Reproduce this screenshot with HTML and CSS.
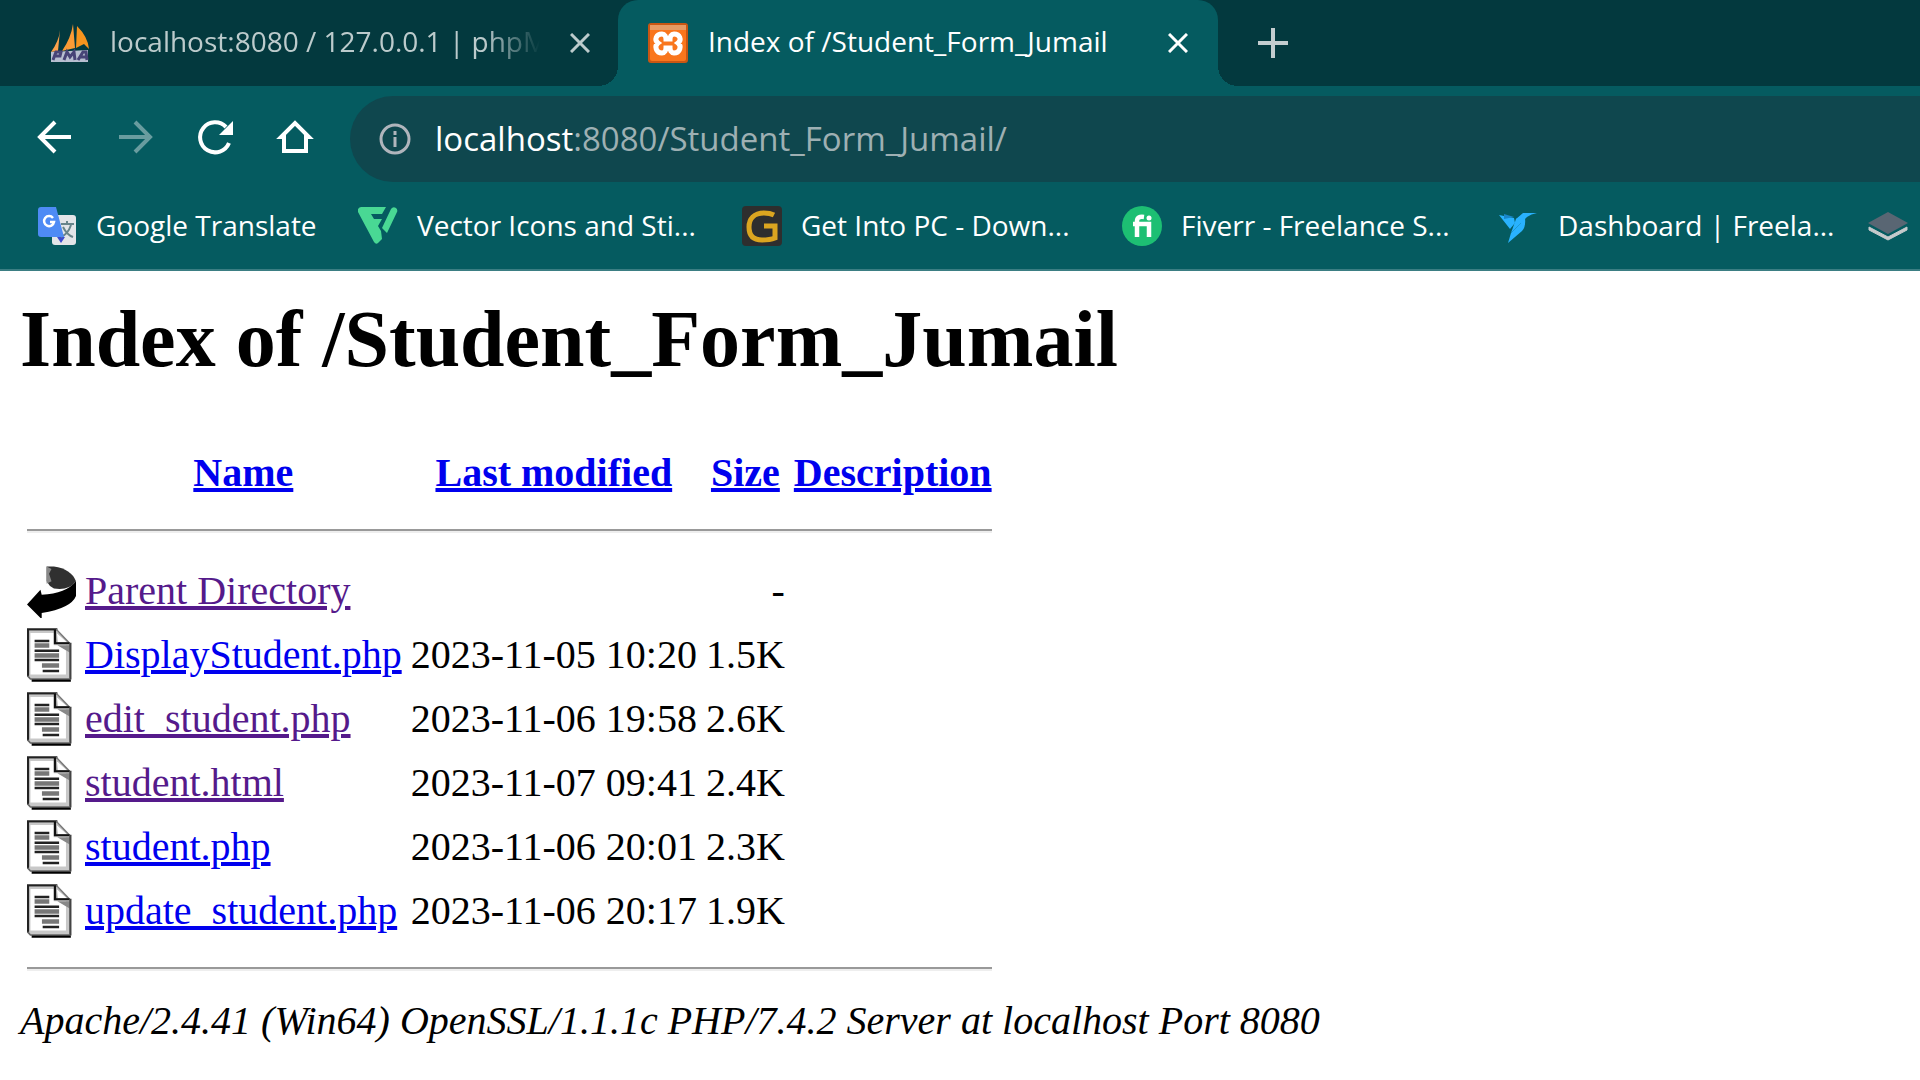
FILE: index.html
```html
<!DOCTYPE html>
<html lang="en">
<head>
<meta charset="utf-8">
<title>Index of /Student_Form_Jumail</title>
<link rel="stylesheet" href="styles.css">
</head>
<body>
<svg class="defs" width="0" height="0" aria-hidden="true">
  <symbol id="file" viewBox="0.6 0 20 22">
    <path d="M1 1h11.500l6 5.500V21H2.500L.5 19.500V.5z" fill="#c8c8c8"/>
    <path d="M2 2h9.500v5h5v12H2z" fill="#fff"/>
    <path d="M12.500 1.500l5 4.500h-4.500z" fill="#fff" stroke="#bbb" stroke-width=".5"/>
    <path d="M1 19.800V.5h12" fill="none" stroke="#222" stroke-width=".9"/>
    <path d="M12 .5l.4 5.700h5.600L12.500.5" fill="none" stroke="#777" stroke-width=".6"/>
    <path d="M12 .5v5.700h6" fill="none" stroke="#111" stroke-width=".9"/>
    <path d="M13 7h5v3z" fill="#888"/>
    <path d="M18.300 6v15" stroke="#444" stroke-width=".9"/>
    <path d="M.8 19.500l1.200 1.300h16" fill="none" stroke="#666" stroke-width=".7"/>
    <path d="M2.500 21.500h16" stroke="#000" stroke-width=".9"/>
    <path d="M3.700 5.300h6M3.700 9.300h10M3.700 13h10M7 17.500h6.700" stroke="#222" stroke-width="1"/>
    <path d="M3.700 7.100h6M3.700 11.200h10M6.700 15.300h7" stroke="#777" stroke-width="1.800"/>
  </symbol>
</svg>
<header class="browser">
  <nav class="tabs" aria-label="Tabs">
    <div class="tab">
      <svg class="favicon" viewBox="0 0 40 40"><path d="M10 7L8 28 1 29Q9 18 10 7z" fill="#fca14b"/><path d="M23 1l2 24-13 3Q21 15 23 1z" fill="#fb9b36"/><path d="M27 3q11 11 12 23l-5-5-8 4z" fill="#f7941e"/><path d="M1 29l37-2v12H1z" fill="#b7bfd0"/><path d="M3 37l3-8h5l-1 4H5M14 37l3-8 3 5 4-5 1 8M28 37l5-8h3l1 8M30 34h6" fill="none" stroke="#474477" stroke-width="3"/></svg>
      <a class="tab-title fade" href="#">localhost:8080 / 127.0.0.1 | phpM</a>
      <button class="close" aria-label="Close tab"><svg viewBox="0 0 20 20"><path d="M1 1l18 18M19 1L1 19"/></svg></button>
    </div>
    <div class="tab active">
      <svg class="favicon" viewBox="0 0 40 40"><rect width="40" height="40" rx="3" fill="#c95613"/><rect x="2" y="2" width="36" height="36" rx="2" fill="#f9761d"/><path d="M2 2h36v5H2z" fill="#e79a63"/><path d="M14 11c-6 0-8 6-4 9-4 3-2 10 4 10 3 0 4-3 4-5h4c0 2 1 5 4 5 6 0 8-7 4-10 4-3 2-9-4-9-3 0-4 3-4 5h-4c0-2-1-5-4-5z" fill="none" stroke="#fff" stroke-width="5"/></svg>
      <a class="tab-title" href="#">Index of /Student_Form_Jumail</a>
      <button class="close" aria-label="Close tab"><svg viewBox="0 0 20 20"><path d="M1 1l18 18M19 1L1 19"/></svg></button>
    </div>
    <button class="new-tab" aria-label="New tab"><svg viewBox="0 0 30 30"><path d="M15 0v30M0 15h30"/></svg></button>
  </nav>
  <div class="toolbar">
    <div class="tools">
      <button class="tool" aria-label="Back"><svg viewBox="0 0 40 40"><path d="M36 20H5M20 5L5 20l15 15"/></svg></button>
      <button class="tool" aria-label="Forward" disabled><svg viewBox="0 0 40 40"><path d="M4 20h31M20 5l15 15-15 15"/></svg></button>
      <button class="tool" aria-label="Reload"><svg viewBox="0 0 40 40"><path d="M34 26A15 15 0 1 1 31 10"/><path class="solid" d="M38 4v14H24z"/></svg></button>
      <button class="tool" aria-label="Home"><svg viewBox="0 0 40 40"><path d="M9 34V20H6L20 6l14 14h-3v14z"/></svg></button>
    </div>
    <div class="address-bar">
      <svg class="info" viewBox="0 0 32 32"><circle cx="16" cy="16" r="14"/><path d="M16 14v10M16 8v4"/></svg>
      <a class="url" href="#"><span class="host">localhost</span>:8080/Student_Form_Jumail/</a>
    </div>
  </div>
  <nav class="bookmarks" aria-label="Bookmarks">
    <a href="#"><svg class="favicon" viewBox="0 0 40 40"><rect x="15" y="9" width="24" height="30" rx="3" fill="#e3e5e8"/><path d="M20 31h8l-4 6z" fill="#3d4ccf"/><path d="M24 18h13M30 15v3M34 19q-3 9-10 12M26 21q4 8 10 10" fill="none" stroke="#68848a" stroke-width="2"/><path d="M4 1h15l8 30H4q-3 0-3-3V4q0-3 3-3z" fill="#4e8bf5"/><path d="M16 12a5 5 0 1 0 1 4h-4" fill="none" stroke="#fff" stroke-width="2.500"/></svg><span>Google Translate</span></a>
    <a href="#"><svg class="favicon" viewBox="0 0 40 40"><path d="M3 1h25l-4 7H13l3 5h8l-4 7 3 5 1 8-4 4q-2 2-4-1L0 6Q-1 2 3 1zM33 3q2-3 5-1 2 2 1 4L29 27l-5-5z" fill="#49d894"/></svg><span>Vector Icons and Sti...</span></a>
    <a href="#"><svg class="favicon" viewBox="0 0 40 40"><rect width="40" height="40" rx="4" fill="#2e2e2e"/><path d="M32 9q-4-2-10-2C12 7 7 13 7 21s4 13 13 13q8 0 13-2V20H22" fill="none" stroke="#dba520" stroke-width="5"/></svg><span>Get Into PC - Down...</span></a>
    <a href="#"><svg class="favicon" viewBox="0 0 40 40"><circle cx="20" cy="20" r="20" fill="#1dbf73"/><path d="M15 31V15q0-5 7-4M11 18h16v13" fill="none" stroke="#fff" stroke-width="4.500"/><circle cx="27" cy="12" r="2.500" fill="#fff"/></svg><span>Fiverr - Freelance S...</span></a>
    <a href="#"><svg class="favicon" viewBox="0 0 40 40"><path d="M0 9l15 3 1 5-5 6zM17 13l7-6h14q-6 1-10 4l-6 6zM21 18l5-6q1 9-3 13L9 37l3-10z" fill="#29b2fe"/><path d="M17 13l-5 14 9-9 4-5-3-3z" fill="#29b2fe"/><path d="M5 8l10 3-10 2z" fill="#1a86c8"/></svg><span>Dashboard | Freela...</span></a>
    <a href="#" aria-label="Layers"><svg class="favicon" viewBox="0 0 40 40"><path d="M1 21l19 10 19-10v3L20 34 1 24z" fill="#c6cacc" stroke="#c6cacc"/><path d="M20 6l20 11-20 11L0 17z" fill="#596673"/></svg></a>
  </nav>
</header>
<main class="listing">
  <h1>Index of /Student_Form_Jumail</h1>
  <table>
    <thead>
      <tr><th></th><th><a href="#">Name</a></th><th><a href="#">Last modified</a></th><th><a href="#">Size</a></th><th><a href="#">Description</a></th></tr>
      <tr class="rule"><td colspan="5"><hr></td></tr>
    </thead>
    <tbody>
      <tr><td><svg class="icon" viewBox="0 0 20 22"><path d="M8 1h3q7 1 9 6-3 4-9 3-2-1-3-3z" fill="#303030"/><path d="M8 1l2 1-1 2 1 3-2 1z" fill="#888"/><path d="M20 7v6q-2 5-14 7v2.500L0 16.500 5.500 10.500l.5 2Q16 12 20 7z" fill="#000"/></svg></td><td><a class="visited" href="#">Parent Directory</a></td><td></td><td class="size">-</td><td></td></tr>
      <tr><td><svg class="icon"><use href="#file"/></svg></td><td><a href="#">DisplayStudent.php</a></td><td>2023-11-05 10:20</td><td class="size">1.5K</td><td></td></tr>
      <tr><td><svg class="icon"><use href="#file"/></svg></td><td><a class="visited" href="#">edit_student.php</a></td><td>2023-11-06 19:58</td><td class="size">2.6K</td><td></td></tr>
      <tr><td><svg class="icon"><use href="#file"/></svg></td><td><a class="visited" href="#">student.html</a></td><td>2023-11-07 09:41</td><td class="size">2.4K</td><td></td></tr>
      <tr><td><svg class="icon"><use href="#file"/></svg></td><td><a href="#">student.php</a></td><td>2023-11-06 20:01</td><td class="size">2.3K</td><td></td></tr>
      <tr><td><svg class="icon"><use href="#file"/></svg></td><td><a href="#">update_student.php</a></td><td>2023-11-06 20:17</td><td class="size">1.9K</td><td></td></tr>
      <tr class="rule"><td colspan="5"><hr></td></tr>
    </tbody>
  </table>
  <address>Apache/2.4.41 (Win64) OpenSSL/1.1.1c PHP/7.4.2 Server at localhost Port 8080</address>
</main>
</body>
</html>
```
FILE: styles.css
```css
* { box-sizing: border-box; }
body { margin: 0; background: #fff; color: #000; font-family: "Liberation Serif", serif; font-size: 40px; line-height: 44px; overflow-x: hidden; }
.defs { position: absolute; }
button { border: 0; padding: 0; background: none; color: inherit; display: grid; place-items: center; }
svg { flex: none; display: block; }

.browser { background: #055b60; border-bottom: 2px solid #3b7e83; color: #fff; font: 28px/40px "Open Sans", sans-serif; overflow: hidden; }
.browser a { color: inherit; text-decoration: none; white-space: nowrap; }
.favicon { width: 40px; height: 40px; }

.tabs { display: flex; height: 86px; background: #03393e; }
.tab { display: flex; align-items: center; gap: 20px; flex: none; width: 618px; padding: 0 28px 0 50px; color: #bccbcc; }
.tab:first-child { border-bottom-right-radius: 20px; }
.tab.active { position: relative; width: 600px; padding: 0 30px; background: #055b60; color: #fff; border-radius: 20px 20px 0 0; }
.tab.active::before, .tab.active::after { content: ""; position: absolute; bottom: 0; width: 20px; height: 20px; }
.tab.active::before { right: 100%; background: radial-gradient(circle at 0 0, transparent 20px, #055b60 20px); }
.tab.active::after { left: 100%; background: radial-gradient(circle at 100% 0, transparent 20px, #055b60 20px); }
.tab-title { flex: 1; min-width: 0; padding-bottom: 4px; }
.fade { mask-image: linear-gradient(to right, #000 87%, transparent); }
.close { flex: none; width: 20px; height: 20px; margin-left: 10px; }
.close svg { width: 20px; height: 20px; stroke: currentColor; stroke-width: 3; }
.new-tab { width: 30px; margin-left: 40px; color: #c3cdcf; }
.new-tab svg { width: 30px; height: 30px; stroke: currentColor; stroke-width: 4; }

.toolbar { display: flex; align-items: center; gap: 35px; padding: 10px 0 0 35px; }
.tools { display: flex; gap: 40px; padding-bottom: 4px; }
.tool { width: 40px; height: 40px; }
.tool svg { width: 40px; height: 40px; fill: none; stroke: #fff; stroke-width: 4; }
.tool .solid { fill: #fff; stroke: none; }
.tool:disabled { opacity: 0.4; }
.address-bar { flex: 1; display: flex; align-items: center; gap: 24px; height: 86px; padding-left: 29px; border-radius: 43px 0 0 43px; background: #0f474e; font-size: 33px; }
.info { width: 32px; height: 32px; fill: none; stroke: #b0b5bc; stroke-width: 3; }
.address-bar .url { color: #9eb0b3; }
.host { color: #fff; }

.bookmarks { display: grid; grid-template-columns: 321px 384px 380px 377px 369px 40px; padding: 23px 0 22px 37px; }
.bookmarks a { display: flex; align-items: center; gap: 19px; }
.bookmarks span { padding-bottom: 2px; }

.listing { padding: 24px 20px 20px; }
h1 { margin: 0 0 55px; font-size: 80px; line-height: 88px; }
table { border-spacing: 5px; }
th, td { height: 59px; padding: 2px; white-space: nowrap; }
.rule td { height: auto; }
hr { margin: 20px 0 21px; border-width: 2px 0; border-style: solid; border-color: #999 #eee #eee; }
.size { text-align: right; }
.icon { width: 49px; height: 54px; }
.listing a { color: #00e; }
.listing a.visited { color: #551a8b; }
address { font-style: italic; }
```
